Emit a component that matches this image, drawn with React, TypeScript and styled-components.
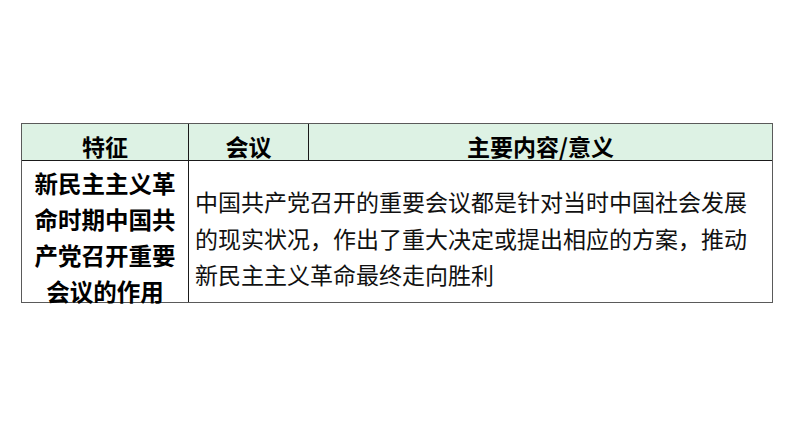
import React from 'react'
import styled, { createGlobalStyle } from 'styled-components'

const GlobalStyle = createGlobalStyle`
    html, body {
        margin: 0;
        padding: 0;
        background: #ffffff;
    }
    body {
        font-family: "Noto Sans CJK SC", "Noto Sans", sans-serif;
        color: #000;
    }
`

interface Row {
    feature: string[];
    content: string[];
}

const headers = ['特征', '会议', '主要内容/意义']

const rows: Row[] = [
    {
        feature: ['新民主主义革', '命时期中国共', '产党召开重要', '会议的作用'],
        content: [
            '中国共产党召开的重要会议都是针对当时中国社会发展',
            '的现实状况，作出了重大决定或提出相应的方案，推动',
            '新民主主义革命最终走向胜利',
        ],
    },
]

const App: React.FC = () => {
    return (
        <>
            <GlobalStyle />
            <Page>
                <Table>
                    {headers.map((h, i) => (
                        <HeadCell key={h} last={i === headers.length - 1}>{h}</HeadCell>
                    ))}
                    {rows.map((row, i) => (
                        <React.Fragment key={i}>
                            <FeatureCell>
                                {row.feature.map((line, j) => <Line key={j}>{line}</Line>)}
                            </FeatureCell>
                            <ContentCell>
                                {row.content.map((line, j) => <Line key={j}>{line}</Line>)}
                            </ContentCell>
                        </React.Fragment>
                    ))}
                </Table>
            </Page>
        </>
    )
}

export default App

const Page = styled.div`
    width: 794px;
    height: 447px;
    padding: 123px 0 0 21px;
    box-sizing: border-box;
`

const Table = styled.div`
    width: 752px;
    display: grid;
    grid-template-columns: 167px 120px 1fr;
    grid-template-rows: 37px 141px;
    border: 1.5px solid #5a5a5a;
    box-sizing: border-box;
`

const HeadCell = styled.div<{ last?: boolean }>`
    background: #ddf2e4;
    border-bottom: 1.5px solid #1a1a1a;
    border-right: ${p => (p.last ? 'none' : '1.5px solid #1a1a1a')};
    display: flex;
    align-items: center;
    justify-content: center;
    font-size: 23px;
    font-weight: 700;
    line-height: 1;
    padding-top: 8px;
    box-sizing: border-box;
`

const FeatureCell = styled.div`
    border-right: 1.5px solid #1a1a1a;
    padding-top: 4px;
    text-align: center;
    font-size: 23.5px;
    font-weight: 700;
    line-height: 36px;
    white-space: nowrap;
`

const ContentCell = styled.div`
    grid-column: 2 / 4;
    padding: 22px 0 0 6px;
    font-size: 23px;
    font-weight: 400;
    line-height: 36.5px;
    white-space: nowrap;
    color: #111;
`

const Line = styled.div``
